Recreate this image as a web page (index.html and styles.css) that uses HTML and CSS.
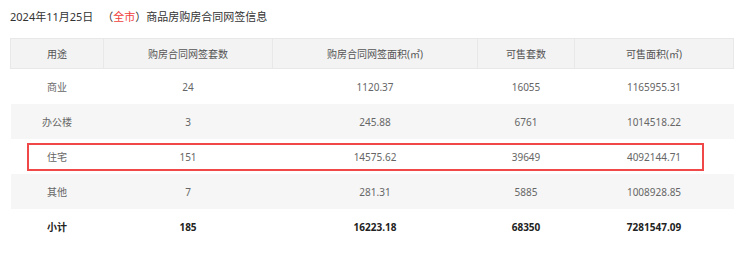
FILE: index.html
```html
<!DOCTYPE html>
<html lang="zh-CN">
<head>
<meta charset="utf-8">
<link rel="stylesheet" href="styles.css">
</head>
<body>
<div class="page">
  <div class="title">2024年11月25日<span class="paren">（<span class="city">全市</span>）</span>商品房购房合同网签信息</div>
  <div class="table-wrap">
    <table class="data">
      <colgroup>
        <col class="c1"><col class="c2"><col class="c3"><col class="c4"><col class="c5">
      </colgroup>
      <thead>
        <tr><th>用途</th><th>购房合同网签套数</th><th>购房合同网签面积(㎡)</th><th>可售套数</th><th>可售面积(㎡)</th></tr>
      </thead>
      <tbody>
        <tr><td>商业</td><td>24</td><td>1120.37</td><td>16055</td><td>1165955.31</td></tr>
        <tr class="alt"><td>办公楼</td><td>3</td><td>245.88</td><td>6761</td><td>1014518.22</td></tr>
        <tr><td>住宅</td><td>151</td><td>14575.62</td><td>39649</td><td>4092144.71</td></tr>
        <tr class="alt"><td>其他</td><td>7</td><td>281.31</td><td>5885</td><td>1008928.85</td></tr>
        <tr class="total"><td>小计</td><td>185</td><td>16223.18</td><td>68350</td><td>7281547.09</td></tr>
      </tbody>
    </table>
    <div class="highlight"></div>
  </div>
</div>
</body>
</html>
```
FILE: styles.css
```css
html, body {
  margin: 0;
  padding: 0;
  background: #fff;
}
.page {
  padding: 9px 7px 0 10px;
  font-family: "Noto Sans", "Noto Sans CJK SC", sans-serif;
  color: #666;
}
.title {
  font-size: 11px;
  line-height: 16px;
  color: #333;
  height: 16px;
  margin-bottom: 13px;
}
.paren {
  margin-left: 9px;
}
.city {
  color: #f0403c;
}
.table-wrap {
  position: relative;
  width: 723px;
}
.data {
  width: 723px;
  border-collapse: collapse;
  table-layout: fixed;
  font-size: 10px;
}
.c1 { width: 93px; }
.c2 { width: 169px; }
.c3 { width: 205px; }
.c4 { width: 97px; }
.c5 { width: 159px; }
.data th {
  height: 29px;
  padding: 0;
  background: #f3f3f3;
  border: 1px solid #e8e8e8;
  font-weight: normal;
  color: #555;
  text-align: center;
}
.data td {
  height: 35px;
  padding: 0;
  text-align: center;
  color: #666;
}
.data tr.alt td {
  background: #f6f6f6;
}
.data tr.total td {
  font-weight: bold;
  color: #222;
}
.highlight {
  position: absolute;
  left: 17px;
  top: 105px;
  width: 677px;
  height: 28px;
  box-sizing: border-box;
  border: 2px solid #f04848;
}
```
